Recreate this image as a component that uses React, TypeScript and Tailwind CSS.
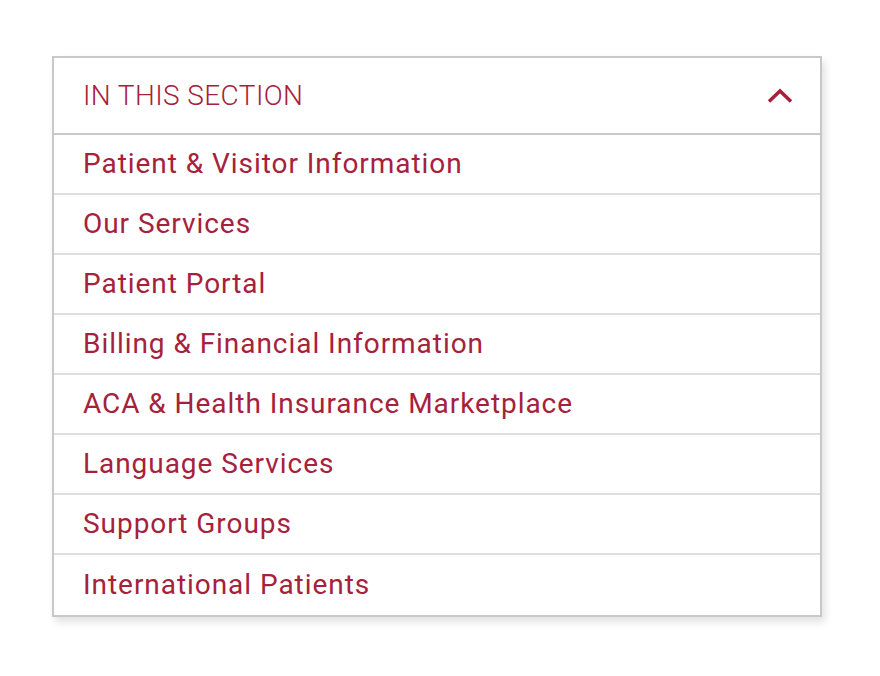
import React from "react";

const items = [
  "Patient & Visitor Information",
  "Our Services",
  "Patient Portal",
  "Billing & Financial Information",
  "ACA & Health Insurance Marketplace",
  "Language Services",
  "Support Groups",
  "International Patients",
];

export default function App() {
  return (
    <div className="min-h-[676px] w-[880px] bg-white pt-[56px] pl-[52px]" style={{ fontFamily: "Roboto, 'Liberation Sans', sans-serif" }}>
      <div className="w-[770px] border-2 border-[#c8c8c8] bg-white shadow-[3px_5px_8px_rgba(0,0,0,0.12)]">
        <div className="flex h-[77px] items-center justify-between border-b-2 border-[#c8c8c8] pl-[29px] pr-[27px]">
          <span className="text-[28px] font-light tracking-[0.4px] text-[#a6213b]">IN THIS SECTION</span>
          <svg width="26" height="16" viewBox="0 0 26 16" fill="none">
            <path d="M2 13.5 L13 3 L24 13.5" stroke="#a6213b" strokeWidth="3.5" />
          </svg>
        </div>
        {items.map((t, i) => (
          <div
            key={t}
            className={
              "flex h-[60px] items-center pl-[29px] text-[28px] tracking-[0.95px] text-[#a6213b] " +
              (i < items.length - 1 ? "border-b-2 border-[#dedede]" : "")
            }
          >
            {t}
          </div>
        ))}
      </div>
    </div>
  );
}
